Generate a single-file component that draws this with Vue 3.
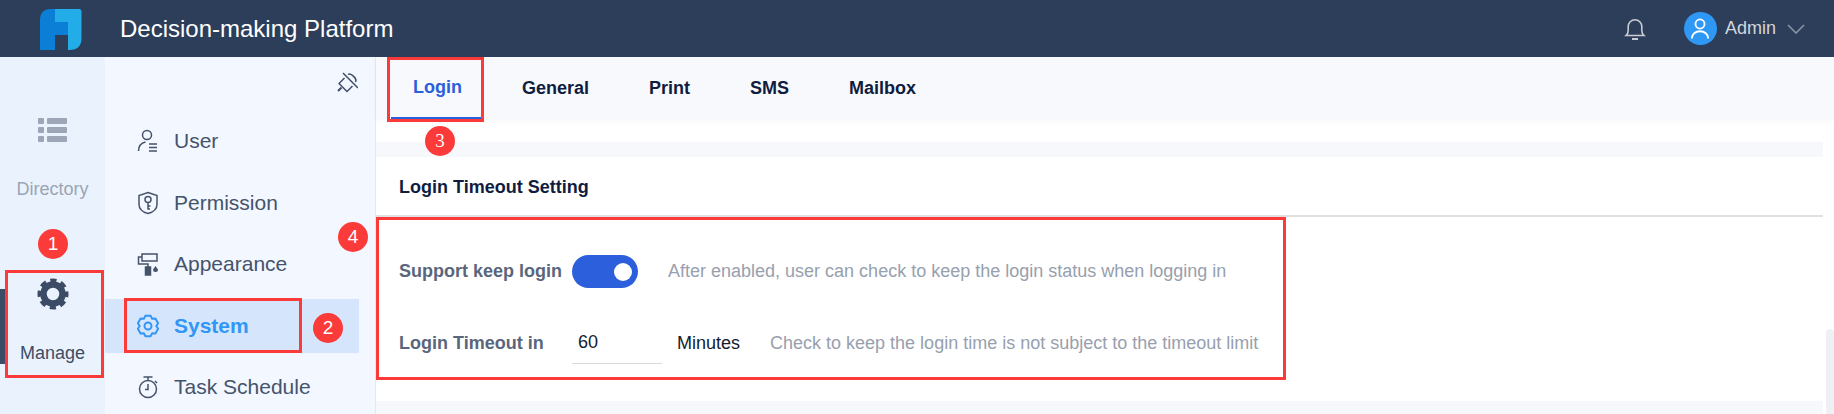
<template>
  <div class="page">
    <header class="topbar">
      <svg class="logo" width="42" height="42" viewBox="40 6 42 42">
        <path d="M40 18Q40 7 51 7H55V20H68V33H55V48H40Z" fill="#0b7fd6" />
        <path d="M55 7H79Q81.5 7 81.5 9.5V36Q81.5 48 69.5 48H68V20H55Z" fill="#22ade9" />
      </svg>
      <div class="title">Decision-making Platform</div>
      <svg class="bell" width="22" height="24" viewBox="0 0 22 24" fill="none" stroke="#c9ccd2" stroke-width="1.6">
        <path d="M2 18.5h18c-1.6-1.4-2.2-2.6-2.2-5V9.5a6.8 6.8 0 0 0-13.6 0v4c0 2.4-.6 3.600-2.200 5z" />
        <path d="M8 22h6" stroke-width="2" />
      </svg>
      <div class="avatar">
        <svg width="22" height="26" viewBox="0 0 22 26" fill="none" stroke="#fff" stroke-width="2">
          <circle cx="11" cy="7.500" r="5" />
          <path d="M2 23.500c0-5 4-8 9-8s9 3 9 8" />
        </svg>
      </div>
      <span class="user-name">Admin</span>
      <svg class="chevron" width="18" height="10" viewBox="0 0 18 10" fill="none" stroke="#8b94a3" stroke-width="1.600">
        <path d="M1 1l8 8 8-8" />
      </svg>
    </header>

    <div class="body">
      <!-- 一级导航 -->
      <aside class="rail">
        <div class="rail-item">
          <svg width="30" height="26" viewBox="0 0 30 26" fill="#9ca6b7">
            <rect x="0" y="1" width="6" height="6" rx="1" />
            <rect x="9" y="1" width="20" height="6" rx="1" />
            <rect x="0" y="10" width="6" height="6" rx="1" />
            <rect x="9" y="10" width="20" height="6" rx="1" />
            <rect x="0" y="19" width="6" height="6" rx="1" />
            <rect x="9" y="19" width="20" height="6" rx="1" />
          </svg>
          <span>Directory</span>
        </div>
        <div class="rail-item active">
          <i class="rail-mark"></i>
          <svg width="32" height="32" viewBox="0 0 32 32" fill="none" stroke="#3c4c66">
            <circle cx="16" cy="16" r="9.500" stroke-width="6.500" />
            <circle cx="16" cy="16" r="13.500" stroke-width="4" stroke-dasharray="6.200 4.400" stroke-dashoffset="3.100" />
          </svg>
          <span>Manage</span>
        </div>
      </aside>

      <!-- 二级菜单 -->
      <nav class="menu">
        <div class="pin-row">
          <svg width="22" height="22" viewBox="0 0 22 22" fill="none" stroke="#3f4e68" stroke-width="1.500" stroke-linejoin="round">
            <path d="M8.500 6L3 11.500l8 8L16.500 14" />
            <path d="M7 1l15 15" />
            <path d="M12 2.500c3-2 9.500 4.500 7.500 7.500" />
            <path d="M5.500 15.500L2 19" stroke-width="2" />
          </svg>
        </div>
        <div v-for="item in menuItems" :key="item.name" class="menu-item" :class="{ current: item.current }">
          <svg width="22" height="24" viewBox="0 0 22 24" fill="none" stroke="currentColor" stroke-width="1.500">
            <template v-if="item.icon === 'user'">
              <circle cx="10" cy="6" r="4.500" />
              <path d="M1.500 22c0-5 3-8 7-9" />
              <path d="M12 15h8M12 18.500h8M12 22h8" />
            </template>
            <template v-else-if="item.icon === 'shield'">
              <path d="M11 1.500l9 3v9c0 4.500-3.500 7.500-9 9-5.500-1.500-9-4.500-9-9v-9z" />
              <circle cx="11" cy="8.500" r="3" />
              <path d="M11 11.500v7M11 15h2.500M11 18h2" />
            </template>
            <template v-else-if="item.icon === 'roller'">
              <path d="M5 2h15v7H5zM5 5H1.500v7H11v3" />
              <rect x="8.500" y="15" width="5" height="8" fill="currentColor" />
              <path d="M18.500 14l2.500 3.500a2.500 2.500 0 0 1-5 0z" fill="currentColor" stroke="none" />
            </template>
            <template v-else-if="item.icon === 'gear'">
              <path :d="gearPath" stroke-width="2" stroke-linejoin="round" />
              <circle cx="11" cy="12" r="3.500" stroke-width="2" />
            </template>
            <template v-else>
              <circle cx="11" cy="14" r="8.500" />
              <path d="M11 9v5.500h-3M6.500 2h9M11 2v3.500M18 6l2 2" />
            </template>
          </svg>
          <span>{{ item.name }}</span>
        </div>
      </nav>

      <main class="content">
        <div class="tabs">
          <div v-for="(tab, i) in tabs" :key="tab" class="tab" :class="{ selected: i === 0 }">{{ tab }}</div>
        </div>
        <div class="spacer"></div>
        <div class="strip"></div>
        <section class="panel">
          <div class="panel-title">Login Timeout Setting</div>
          <div class="panel-body">
            <div class="row">
              <label class="row-label">Support keep login</label>
              <div class="switch"><i></i></div>
              <span class="hint first">After enabled, user can check to keep the login status when logging in</span>
            </div>
            <div class="row">
              <label class="row-label">Login Timeout in</label>
              <input class="minutes" value="60" />
              <span class="unit">Minutes</span>
              <span class="hint">Check to keep the login time is not subject to the timeout limit</span>
            </div>
          </div>
        </section>
        <div class="strip bottom"></div>
        <div class="scrollbar"></div>
      </main>
    </div>

    <!-- 教程标注 -->
    <div class="mark box-1"></div>
    <div class="mark box-2"></div>
    <div class="mark box-3"></div>
    <div class="mark box-4"></div>
    <span class="badge badge-1">1</span>
    <span class="badge badge-2">2</span>
    <span class="badge badge-3">3</span>
    <span class="badge badge-4">4</span>
  </div>
</template>

<script setup>
const menuItems = [
  { name: 'User', icon: 'user' },
  { name: 'Permission', icon: 'shield' },
  { name: 'Appearance', icon: 'roller' },
  { name: 'System', icon: 'gear', current: true },
  { name: 'Task Schedule', icon: 'clock' }
];
const tabs = ['Login', 'General', 'Print', 'SMS', 'Mailbox'];

// 六瓣齿轮的轮廓
function buildGear() {
  const pts = [];
  for (let i = 0; i < 6; i++) {
    const a = (i * 60 - 90) * Math.PI / 180;
    [[-0.26, 10.500], [0.26, 10.500], [0.52, 8.300]].forEach(([d, r]) => {
      pts.push(`${(11 + r * Math.cos(a + d)).toFixed(2)} ${(12 + r * Math.sin(a + d)).toFixed(2)}`);
    });
  }
  return `M${pts.join('L')}Z`;
}
const gearPath = buildGear();
</script>

<style>
body {
  margin: 0;
}
</style>

<style scoped>
.page {
  position: relative;
  width: 1834px;
  height: 414px;
  overflow: hidden;
  font-family: "Liberation Sans", Arial, sans-serif;
  background: #fff;
}

.topbar {
  display: flex;
  align-items: center;
  height: 57px;
  padding-left: 40px;
  background: #2c3e5a;
  color: #fff;
}
.title {
  margin-left: 38px;
  font-size: 24px;
}
.bell {
  margin-left: auto;
}
.avatar {
  display: flex;
  align-items: center;
  justify-content: center;
  width: 33px;
  height: 33px;
  margin-left: 38px;
  border-radius: 50%;
  background: #2f98f5;
}
.avatar svg {
  width: 20px;
  height: 24px;
}
.user-name {
  margin-left: 8px;
  font-size: 18px;
  color: #d3d6db;
}
.chevron {
  margin: 0 29px 0 11px;
}

.body {
  display: flex;
  height: 357px;
}

.rail {
  width: 105px;
  padding-top: 48px;
  background: #eaf2fd;
  box-sizing: border-box;
}
.rail-item {
  position: relative;
  display: flex;
  flex-direction: column;
  align-items: center;
  justify-content: space-between;
  height: 108px;
  padding: 12px 0 13px;
  box-sizing: border-box;
  font-size: 18px;
  color: #9aa5b5;
}
.rail-item.active {
  margin-top: 56px;
  padding-top: 9px;
  color: #3e4d66;
}
.rail-mark {
  position: absolute;
  left: 0;
  top: 20px;
  width: 5px;
  height: 75px;
  background: #3c4c66;
}

.menu {
  width: 271px;
  padding-right: 16px;
  border-right: 1px solid #e3e8f2;
  background: #f3f7ff;
  box-sizing: border-box;
}
.pin-row {
  display: flex;
  justify-content: flex-end;
  height: 57px;
  padding: 15px 1px 0 0;
  box-sizing: border-box;
}
.menu-item {
  display: flex;
  align-items: center;
  gap: 15px;
  height: 54px;
  margin-bottom: 7.500px;
  padding-left: 32px;
  font-size: 21px;
  color: #45536b;
}
.menu-item.current {
  background: #d5e6fc;
  color: #3196f6;
  font-weight: 700;
}

.content {
  position: relative;
  flex: 1;
  display: flex;
  flex-direction: column;
  padding-right: 11px;
}
.tabs {
  display: flex;
  gap: 16px;
  height: 63px;
  margin-right: -11px;
  padding-left: 15px;
  background: #f8f9fc;
  box-shadow: 0 1px 6px rgba(60, 80, 120, 0.04);
}
.tab {
  display: flex;
  align-items: center;
  padding: 0 22px;
  box-sizing: border-box;
  font-size: 18px;
  font-weight: 700;
  color: #0f1d40;
}
.tab.selected {
  border-bottom: 3px solid #2c5fdb;
  color: #2c5fdb;
}
.spacer {
  height: 22px;
}
.strip {
  height: 15px;
  background: #f7f8fc;
}
.strip.bottom {
  flex: 1;
}
.panel {
  height: 244px;
}
.panel-title {
  height: 60px;
  padding: 0 0 0 23px;
  line-height: 61px;
  border-bottom: 2px solid #e0e0e0;
  box-sizing: border-box;
  font-size: 18px;
  font-weight: 700;
  color: #0f1d40;
}
.panel-body {
  display: flex;
  flex-direction: column;
  gap: 32px;
  padding: 34px 0 0 23px;
}
.row {
  display: flex;
  align-items: center;
  height: 40px;
}
.row-label {
  width: 173px;
  flex-shrink: 0;
  font-size: 18px;
  font-weight: 700;
  color: #5a667c;
}
.switch {
  position: relative;
  width: 66px;
  height: 33px;
  border-radius: 17px;
  background: #2c5fdb;
}
.switch i {
  position: absolute;
  top: 8px;
  right: 6px;
  width: 18px;
  height: 18px;
  border-radius: 50%;
  background: #fff;
}
.hint {
  margin-left: 30px;
  font-size: 18px;
  color: #97a0ae;
}
.minutes {
  width: 90px;
  height: 41px;
  padding: 0 0 0 6px;
  border: 0;
  border-bottom: 1px solid #d9dbe0;
  outline: none;
  box-sizing: border-box;
  font: 18px "Liberation Sans", Arial, sans-serif;
  color: #141c30;
}
.unit {
  margin-left: 15px;
  font-size: 18px;
  color: #141c30;
}
.scrollbar {
  position: absolute;
  right: 0;
  top: 272px;
  bottom: 0;
  width: 8px;
  border-radius: 4px 4px 0 0;
  background: #eef0f5;
}

.mark {
  position: absolute;
  border: 3px solid #fb3a3a;
  box-sizing: border-box;
}
.box-1 { left: 5px; top: 270px; width: 99px; height: 108px; }
.box-2 { left: 124px; top: 298px; width: 178px; height: 55px; }
.box-3 { left: 387px; top: 57px; width: 97px; height: 65px; }
.box-4 { left: 376px; top: 217px; width: 910px; height: 163px; }

.badge {
  position: absolute;
  display: flex;
  align-items: center;
  justify-content: center;
  width: 30px;
  height: 30px;
  border-radius: 50%;
  background: #fb3a3a;
  font-size: 19px;
  color: #fff;
}
.badge-1 { left: 38px; top: 229px; }
.badge-2 { left: 313px; top: 313px; }
.badge-3 { left: 425px; top: 126px; font-family: "Liberation Serif", serif; }
.badge-4 { left: 338px; top: 222px; }
</style>
